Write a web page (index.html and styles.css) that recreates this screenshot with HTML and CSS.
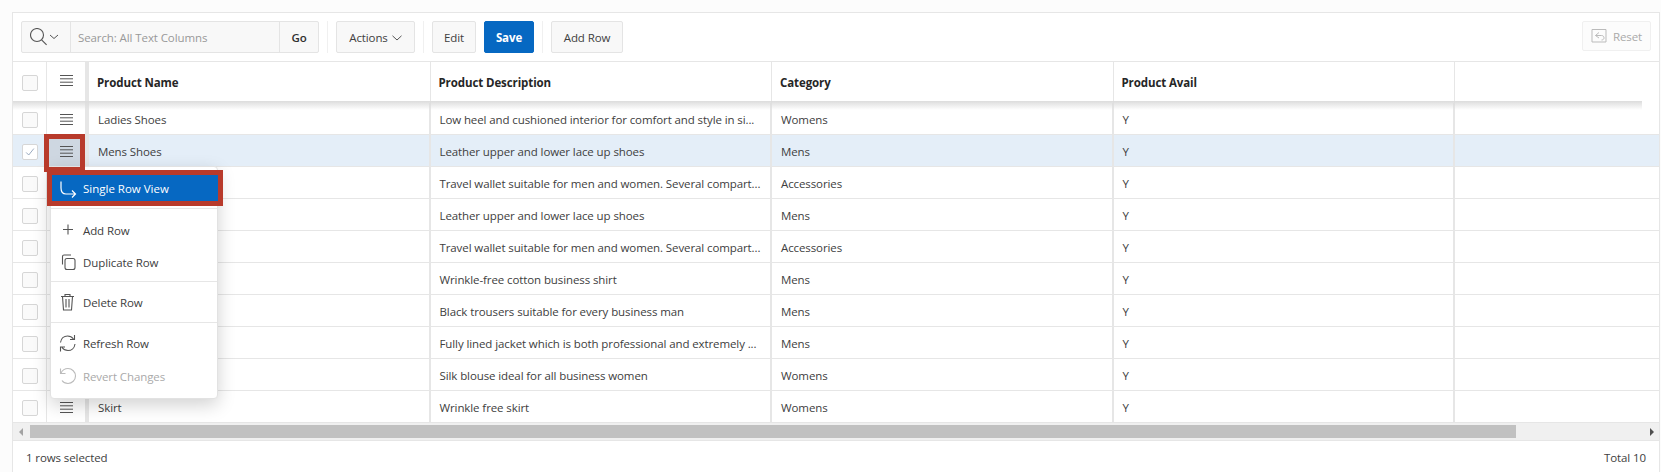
FILE: index.html
```html
<!DOCTYPE html>
<html>
<head>
  <title>Products</title>
  <link rel="stylesheet" href="styles.css">
</head>
<body>
  <svg class="defs">
    <defs>
      <symbol id="ham" viewBox="0 0 13 12">
        <path d="M0 .5h13M0 3.800h13M0 7.200h13M0 10.500h13" stroke="#555" stroke-width="1" fill="none"/>
      </symbol>
    </defs>
  </svg>

  <div class="report">
    <div class="toolbar">
      <div class="search">
        <div class="search-icon">
          <svg width="32" height="18" viewBox="0 0 32 18" fill="none" stroke="#555" stroke-width="1.1">
            <circle cx="7" cy="7" r="6.500"/>
            <path d="M11.600 11.800l5 5"/>
            <path d="M20 7l4 3.500 4-3.500" stroke-width="1"/>
          </svg>
        </div>
        <div class="search-input">Search: All Text Columns</div>
        <div class="search-go">Go</div>
      </div>
      <span class="sep"></span>
      <div class="btn btn-actions">Actions
        <svg width="10" height="6" viewBox="0 0 10 6" fill="none" stroke="#555"><path d="M.5.8l4.500 4.200 4.500-4.200"/></svg>
      </div>
      <span class="sep"></span>
      <div class="btn btn-edit">Edit</div>
      <div class="btn btn-save">Save</div>
      <span class="sep"></span>
      <div class="btn btn-add">Add Row</div>
      <div class="btn btn-reset">
        <svg width="16" height="16" viewBox="0 0 16 16" fill="none" stroke="#bbb">
          <path d="M3 1.500h12v12.500H1V1.500z"/>
          <path d="M8 4.500L4.500 7.500 8 10M4.500 7.500h6c2 0 2.500 1.500 2.500 2.500s-1 2-2.500 2"/>
        </svg>
        Reset
      </div>
    </div>

    <table class="grid">
      <colgroup>
        <col class="c-check"><col class="c-act"><col class="c-data"><col class="c-data"><col class="c-data"><col class="c-data"><col>
      </colgroup>
      <thead>
        <tr>
          <th class="cell-check"><span class="box"></span></th>
          <th class="cell-act"><svg class="ham"><use href="#ham"/></svg></th>
          <th>Product Name</th>
          <th>Product Description</th>
          <th>Category</th>
          <th>Product Avail</th>
          <th></th>
        </tr>
      </thead>
      <tbody>
        <tr>
          <td class="cell-check"><span class="box"></span></td>
          <td class="cell-act"><svg class="ham"><use href="#ham"/></svg></td>
          <td>Ladies Shoes</td>
          <td>Low heel and cushioned interior for comfort and style in si...</td>
          <td>Womens</td><td>Y</td><td></td>
        </tr>
        <tr class="selected">
          <td class="cell-check"><span class="box">
            <svg width="12" height="12" viewBox="0 0 14 14" fill="none" stroke="#8a9db5"><path d="M2.500 7.500l3 3 6-7.500"/></svg>
          </span></td>
          <td class="cell-act"><svg class="ham"><use href="#ham"/></svg></td>
          <td>Mens Shoes</td>
          <td>Leather upper and lower lace up shoes</td>
          <td>Mens</td><td>Y</td><td></td>
        </tr>
        <tr>
          <td class="cell-check"><span class="box"></span></td>
          <td class="cell-act"></td>
          <td></td>
          <td>Travel wallet suitable for men and women. Several compart...</td>
          <td>Accessories</td><td>Y</td><td></td>
        </tr>
        <tr>
          <td class="cell-check"><span class="box"></span></td>
          <td class="cell-act"></td>
          <td></td>
          <td>Leather upper and lower lace up shoes</td>
          <td>Mens</td><td>Y</td><td></td>
        </tr>
        <tr>
          <td class="cell-check"><span class="box"></span></td>
          <td class="cell-act"></td>
          <td></td>
          <td>Travel wallet suitable for men and women. Several compart...</td>
          <td>Accessories</td><td>Y</td><td></td>
        </tr>
        <tr>
          <td class="cell-check"><span class="box"></span></td>
          <td class="cell-act"></td>
          <td></td>
          <td>Wrinkle-free cotton business shirt</td>
          <td>Mens</td><td>Y</td><td></td>
        </tr>
        <tr>
          <td class="cell-check"><span class="box"></span></td>
          <td class="cell-act"></td>
          <td></td>
          <td>Black trousers suitable for every business man</td>
          <td>Mens</td><td>Y</td><td></td>
        </tr>
        <tr>
          <td class="cell-check"><span class="box"></span></td>
          <td class="cell-act"></td>
          <td></td>
          <td>Fully lined jacket which is both professional and extremely ...</td>
          <td>Mens</td><td>Y</td><td></td>
        </tr>
        <tr>
          <td class="cell-check"><span class="box"></span></td>
          <td class="cell-act"></td>
          <td></td>
          <td>Silk blouse ideal for all business women</td>
          <td>Womens</td><td>Y</td><td></td>
        </tr>
        <tr>
          <td class="cell-check"><span class="box"></span></td>
          <td class="cell-act"><svg class="ham"><use href="#ham"/></svg></td>
          <td>Skirt</td>
          <td>Wrinkle free skirt</td>
          <td>Womens</td><td>Y</td><td></td>
        </tr>
      </tbody>
    </table>

    <div class="scrollbar">
      <span class="arrow arrow-left"></span>
      <span class="thumb"></span>
      <span class="arrow arrow-right"></span>
    </div>

    <div class="footer">
      <span>1 rows selected</span>
      <span>Total 10</span>
    </div>

    <div class="head-shadow"></div>

    <div class="menu">
      <div class="menu-group">
        <div class="menu-item active">
          <svg width="18" height="18" viewBox="0 0 18 18" fill="none" stroke="#fff" stroke-width="1.2"><path d="M2 1.500v6.500c0 4 2 6 5 6h9.500M13 10.500l3.500 3.500-3.500 3.500"/></svg>
          Single Row View
        </div>
      </div>
      <div class="menu-group group-add">
        <div class="menu-item">
          <svg width="18" height="18" viewBox="0 0 18 18" fill="none" stroke="#555" stroke-width="1.1"><path d="M9 3.500v10M4 8.500h10"/></svg>
          Add Row
        </div>
        <div class="menu-item">
          <svg width="18" height="18" viewBox="0 0 18 18" fill="none" stroke="#555" stroke-width="1.1"><rect x="6" y="5.500" width="10" height="11" rx="2"/><path d="M3.500 11.500V3.500c0-1 .5-1.500 1.500-1.500h7"/></svg>
          Duplicate Row
        </div>
      </div>
      <div class="menu-group group-tight">
        <div class="menu-item">
          <svg width="18" height="18" viewBox="0 0 18 18" fill="none" stroke="#555" stroke-width="1.1"><path d="M2 3.500h13M6 3.500V1.500h5v2M3.500 3.500l1 13.500h8l1-13.500M7 6v8.500M10 6v8.500"/></svg>
          Delete Row
        </div>
      </div>
      <div class="menu-group group-tight">
        <div class="menu-item">
          <svg width="18" height="18" viewBox="0 0 18 18" fill="none" stroke="#555" stroke-width="1.1"><path d="M1.500 8.500C2 4.500 5 2 8.500 2c2.500 0 4.500 1 6 3M15.500 1v4.500H11M16 10c-.5 4-3.500 6.500-7 6.500-2.500 0-4.500-1-6-3M1.500 17.500V13H6"/></svg>
          Refresh Row
        </div>
        <div class="menu-item disabled">
          <svg width="18" height="18" viewBox="0 0 18 18" fill="none" stroke="#bbb" stroke-width="1.1"><path d="M1.500 1.500v5h5M2 6c1.500-3 4-4.500 7-4.500 4 0 7.500 3.500 7.500 7.500s-3.500 7.500-7.500 7.500c-2.500 0-5-1.500-6-3"/></svg>
          Revert Changes
        </div>
      </div>
    </div>

    <div class="mark mark-cell"></div>
    <div class="mark mark-item"></div>
  </div>
</body>
</html>
```

FILE: styles.css
```css
* {
  box-sizing: border-box;
}

html, body {
  height: 472px;
  overflow: hidden;
}

body {
  margin: 0;
  padding: 12px 1px 0 12px;
  background-color: #fcfcfc;
  font-family: "Open Sans", Arial, sans-serif;
  font-size: 11.500px;
  letter-spacing: -0.1px;
  color: #404040;
}

.defs {
  display: none;
}

.report {
  position: relative;
  height: 460px;
  background-color: #fff;
  border: 1px solid #e6e6e6;
  border-bottom: none;
}

/* toolbar */
.toolbar {
  display: flex;
  align-items: flex-start;
  height: 49px;
  padding: 8px;
  border-bottom: 1px solid #e6e6e6;
}

.search {
  display: flex;
  width: 298px;
  height: 32px;
  background-color: #f8f8f8;
  border: 1px solid #e4e4e4;
  border-radius: 2px;
}

.search-icon {
  display: flex;
  align-items: center;
  width: 49px;
  padding-left: 8px;
  border-right: 1px solid #e4e4e4;
}

.search-input {
  flex: 1;
  padding: 1px 0 0 7px;
  line-height: 30px;
  color: #999;
}

.search-go {
  width: 39px;
  padding-top: 1px;
  border-left: 1px solid #e4e4e4;
  line-height: 30px;
  text-align: center;
  font-weight: 600;
  color: #303030;
}

.sep {
  width: 1px;
  height: 32px;
  margin: 0 8px;
  background-color: #f0f0f0;
}

.btn {
  display: flex;
  align-items: center;
  justify-content: center;
  height: 32px;
  padding-top: 1px;
  background-color: #f8f8f8;
  border: 1px solid #e4e4e4;
  border-radius: 2px;
}

.btn-actions {
  width: 79px;
  gap: 4px;
}

.btn-edit {
  width: 44px;
  margin-right: 8px;
}

.btn-save {
  width: 50px;
  background-color: #0668c2;
  border-color: #0668c2;
  color: #fff;
  font-weight: 700;
}

.btn-add {
  width: 72px;
}

.btn-reset {
  width: 69px;
  height: 30px;
  margin-left: auto;
  padding-top: 0;
  gap: 6px;
  background-color: #fcfcfc;
  border-color: #f0f0f0;
  color: #aaa;
}

/* grid */
.grid {
  width: 100%;
  table-layout: fixed;
  border-collapse: separate;
  border-spacing: 0;
}

.c-check {
  width: 34px;
}

.c-act {
  width: 42px;
}

.c-data {
  width: 341.500px;
}

.grid th {
  height: 41px;
  padding: 0 8px;
  border-right: 1px solid #e6e6e6;
  text-align: left;
  font-weight: 700;
  color: #262626;
}

.grid td {
  height: 32px;
  padding: 2px 8px 0 9px;
  border-right: 2px solid #e6e6e6;
  border-bottom: 1px solid #e6e6e6;
  white-space: nowrap;
  overflow: hidden;
}

.grid th:last-child, .grid td:last-child {
  border-right: none;
}

.grid .cell-check {
  padding-right: 0;
  padding-left: 9px;
  border-right-width: 1px;
}

.grid .cell-act {
  padding-right: 0;
  padding-left: 9px;
  border-right: 4px solid #e6e6e6;
}

.grid th.cell-act {
  padding-bottom: 3px;
}

.box {
  display: flex;
  width: 16px;
  height: 16px;
  align-items: center;
  justify-content: center;
  background-color: #fafafa;
  border: 1px solid #d6d6d6;
  border-radius: 2px;
}

.selected .box {
  background-color: #fff;
}

.ham {
  display: block;
  width: 13px;
  height: 12px;
  margin-left: 4px;
}

.selected td {
  background-color: #e4eef8;
}

.selected .cell-act {
  background-color: #ced7e1;
}

.head-shadow {
  position: absolute;
  top: 88px;
  left: 0;
  width: 1629px;
  height: 9px;
  background: linear-gradient(#dcdcdc, rgba(255, 255, 255, 0));
}

/* scrollbar */
.scrollbar {
  display: flex;
  align-items: center;
  justify-content: space-between;
  height: 18px;
  background-color: #f0f0f0;
  border-bottom: 1px solid #e6e6e6;
}

.thumb {
  width: 1486px;
  height: 13px;
  margin-left: 7px;
  margin-right: auto;
  background-color: #c1c1c1;
}

.arrow {
  width: 0;
  height: 0;
  border-top: 4px solid transparent;
  border-bottom: 4px solid transparent;
}

.arrow-left {
  margin-left: 6px;
  border-right: 4px solid #a3a3a3;
}

.arrow-right {
  margin-right: 5px;
  border-left: 4px solid #505050;
}

.footer {
  display: flex;
  justify-content: space-between;
  padding: 9px 13px;
}

/* row menu */
.menu {
  position: absolute;
  top: 153px;
  left: 37px;
  width: 168px;
  height: 233px;
  background-color: #fff;
  border: 1px solid #e2e2e2;
  border-radius: 4px;
  box-shadow: 0 6px 18px rgba(0, 0, 0, 0.18);
}

.menu-group {
  padding: 5px 0 4px;
  border-bottom: 1px solid #e6e6e6;
}

.group-add {
  padding-bottom: 3px;
}

.group-tight {
  padding-top: 4px;
}

.menu-group:last-child {
  border-bottom: none;
}

.menu-item {
  display: flex;
  align-items: center;
  gap: 6px;
  height: 32px;
  padding-left: 8px;
}

.menu-item.active {
  margin-right: -1px;
  padding-top: 1px;
  background-color: #0668c2;
  color: #fff;
  letter-spacing: 0;
}

.menu-item.disabled {
  margin-top: 1px;
  color: #aaa;
}

/* red annotation boxes */
.mark {
  position: absolute;
  border: 5px solid #b83a2b;
}

.mark-cell {
  top: 121px;
  left: 31px;
  width: 41px;
  height: 38px;
}

.mark-item {
  top: 157px;
  left: 34px;
  width: 176px;
  height: 36px;
}
```
